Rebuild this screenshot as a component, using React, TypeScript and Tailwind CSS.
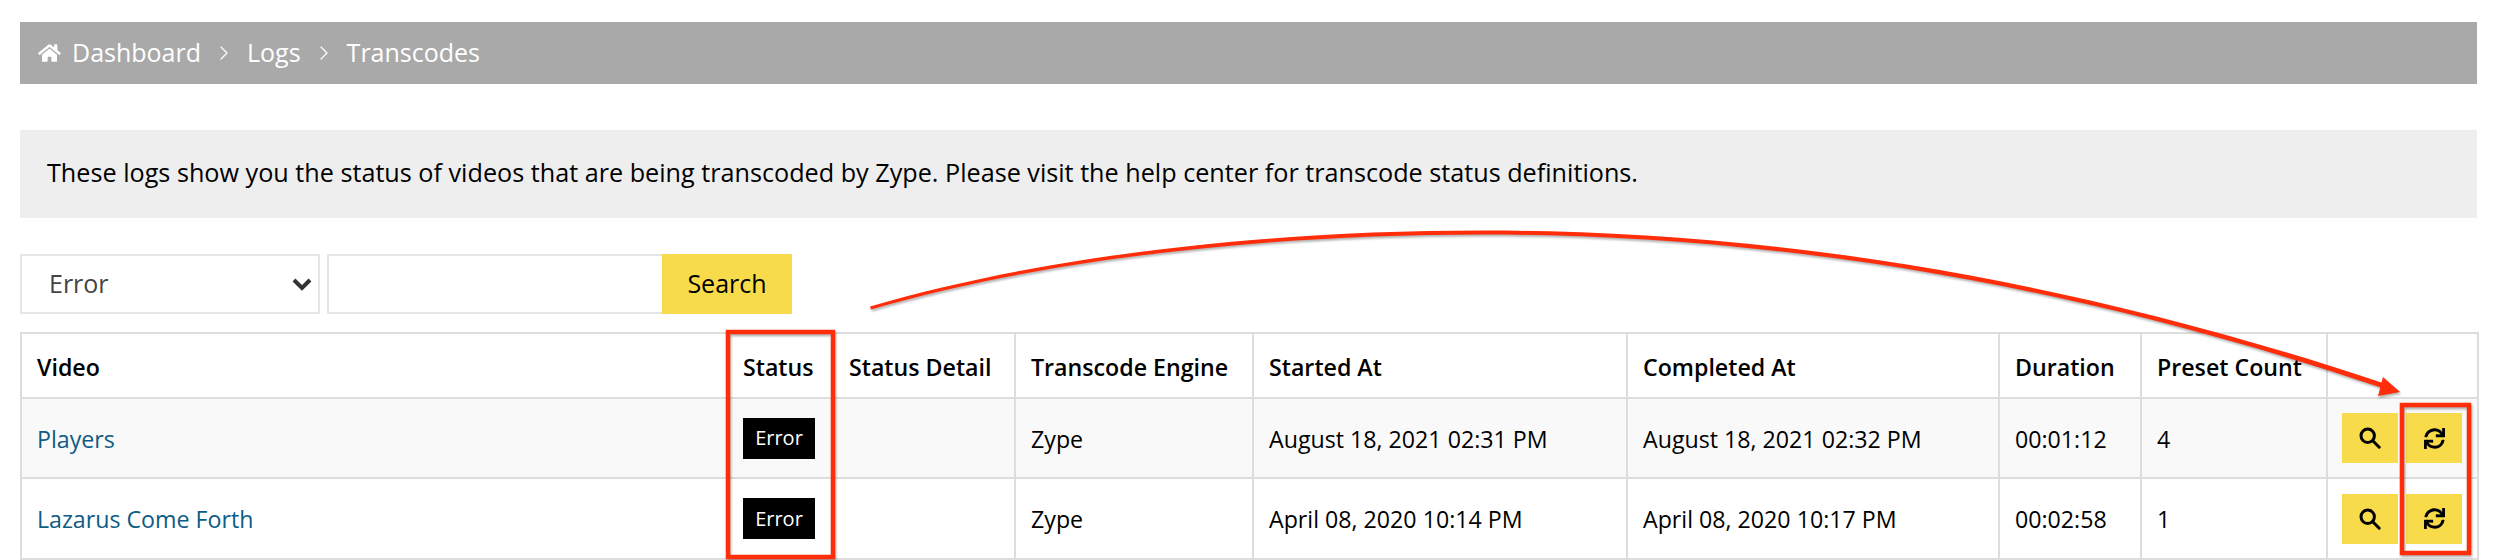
import { FaHome, FaSync } from "react-icons/fa";
import { ChevronRight } from "lucide-react";

const COLS = [
  { label: "Video", width: "w-[706px]" },
  { label: "Status", width: "w-[106px]" },
  { label: "Status Detail", width: "w-[182px]" },
  { label: "Transcode Engine", width: "w-[238px]" },
  { label: "Started At", width: "w-[374px]" },
  { label: "Completed At", width: "w-[372px]" },
  { label: "Duration", width: "w-[142px]" },
  { label: "Preset Count", width: "w-[186px]" },
  { label: "", width: "w-[151px]" },
];

const ROWS = [
  {
    video: "Players",
    engine: "Zype",
    started: "August 18, 2021 02:31 PM",
    completed: "August 18, 2021 02:32 PM",
    duration: "00:01:12",
    presets: 4,
  },
  {
    video: "Lazarus Come Forth",
    engine: "Zype",
    started: "April 08, 2020 10:14 PM",
    completed: "April 08, 2020 10:17 PM",
    duration: "00:02:58",
    presets: 1,
  },
];

const CELL = "border-2 border-[#ddd] px-[15px] align-middle";
const TEXT_CELL = "border-2 border-[#ddd] px-[15px] pt-[2px] align-middle";

function SearchIcon() {
  return (
    <svg width="22" height="22" viewBox="0 0 22 22" fill="none" stroke="currentColor">
      <circle cx="8.7" cy="8.7" r="6.7" strokeWidth="3" />
      <path d="M13.8 13.8 L20.2 20.2" strokeWidth="3" strokeLinecap="round" />
    </svg>
  );
}

function Annotations() {
  return (
    <svg
      className="pointer-events-none absolute left-0 top-0 drop-shadow-[1px_2px_1px_rgba(0,0,0,0.3)]"
      width="2496"
      height="560"
      viewBox="0 0 2496 560"
      fill="none"
    >
      <rect x="728" y="332" width="105" height="225" stroke="#ff2d0a" strokeWidth="4.5" />
      <rect x="2402" y="405" width="67" height="148" stroke="#ff2d0a" strokeWidth="4.5" />
      {/* arrow shaft gets thicker towards the head */}
      <path
        d="M870 306.5 C1040 256.5 1260 230.5 1483 230.5 C1720 230.5 2020 261.5 2386 384 L2384 388.5 C2020 266 1720 234.5 1483 234.5 C1260 234.5 1040 260 871 309.5 Z"
        fill="#ff2d0a"
      />
      <path d="M2400 392 L2383 377 L2378 396 Z" fill="#ff2d0a" />
    </svg>
  );
}

export default function App() {
  return (
    <div className="relative h-[560px] w-[2496px] overflow-hidden bg-white px-5 pt-[22px] font-['Open_Sans','Noto_Sans',sans-serif] text-[23.2px] text-black">
      <nav className="flex h-[62px] w-[2457px] items-center bg-[#a9a9a9] pl-[18px] text-[25px] text-white">
        <FaHome className="mr-[11px] h-[20px] w-[23px]" />
        <span>Dashboard</span>
        <ChevronRight className="mx-[11px] h-6 w-6" strokeWidth={1.2} />
        <span>Logs</span>
        <ChevronRight className="mx-[11px] h-6 w-6" strokeWidth={1.2} />
        <span>Transcodes</span>
      </nav>

      <div className="mt-[46px] flex h-[88px] w-[2457px] items-center bg-[#eee] pb-[2px] pl-[27px] text-[25.2px]">
        These logs show you the status of videos that are being transcoded by Zype. Please visit
        the help center for transcode status definitions.
      </div>

      <form className="mt-9 flex h-[60px]">
        <div className="relative w-[300px]">
          <select className="h-full w-full appearance-none border-2 border-[#e5e5e5] bg-white pl-[27px] text-[25px] text-[#444]">
            <option>Error</option>
          </select>
          <svg
            className="absolute right-2 top-6"
            width="20"
            height="13"
            viewBox="0 0 20 13"
            fill="none"
          >
            <path d="M2 2 L10 10 L18 2" stroke="#333" strokeWidth="4" />
          </svg>
        </div>
        <input className="ml-[7px] h-full w-[335px] border-2 border-r-0 border-[#e5e5e5]" />
        <button type="button" className="h-full w-[130px] bg-[#f8db4a] text-[25px] text-black">
          Search
        </button>
      </form>

      <table className="mt-[18px] w-[2457px] table-fixed border-collapse">
        <thead>
          <tr className="h-[65px]">
            {COLS.map((col) => (
              <th key={col.label} className={`${CELL} ${col.width} pt-[3px] text-left font-semibold`}>
                {col.label}
              </th>
            ))}
          </tr>
        </thead>
        <tbody>
          {ROWS.map((row, i) => (
            <tr key={row.video} className={i === 0 ? "h-[80px] bg-[#f9f9f9]" : "h-[81px]"}>
              <td className={`${TEXT_CELL} text-[#0e5c86]`}>{row.video}</td>
              <td className={CELL}>
                <span className="flex h-[41px] w-[72px] items-center justify-center bg-black text-[20px] text-white">
                  Error
                </span>
              </td>
              <td className={CELL} />
              <td className={TEXT_CELL}>{row.engine}</td>
              <td className={TEXT_CELL}>{row.started}</td>
              <td className={TEXT_CELL}>{row.completed}</td>
              <td className={TEXT_CELL}>{row.duration}</td>
              <td className={TEXT_CELL}>{row.presets}</td>
              <td className="border-2 border-[#ddd] pl-[14px] align-middle">
                <div className="flex gap-2">
                  <button type="button" className="flex h-[50px] w-14 items-center justify-center bg-[#f8db4a]">
                    <SearchIcon />
                  </button>
                  <button type="button" className="flex h-[50px] w-14 items-center justify-center bg-[#f8db4a]">
                    <FaSync className="h-[21px] w-[21px]" />
                  </button>
                </div>
              </td>
            </tr>
          ))}
        </tbody>
      </table>

      <Annotations />
    </div>
  );
}
